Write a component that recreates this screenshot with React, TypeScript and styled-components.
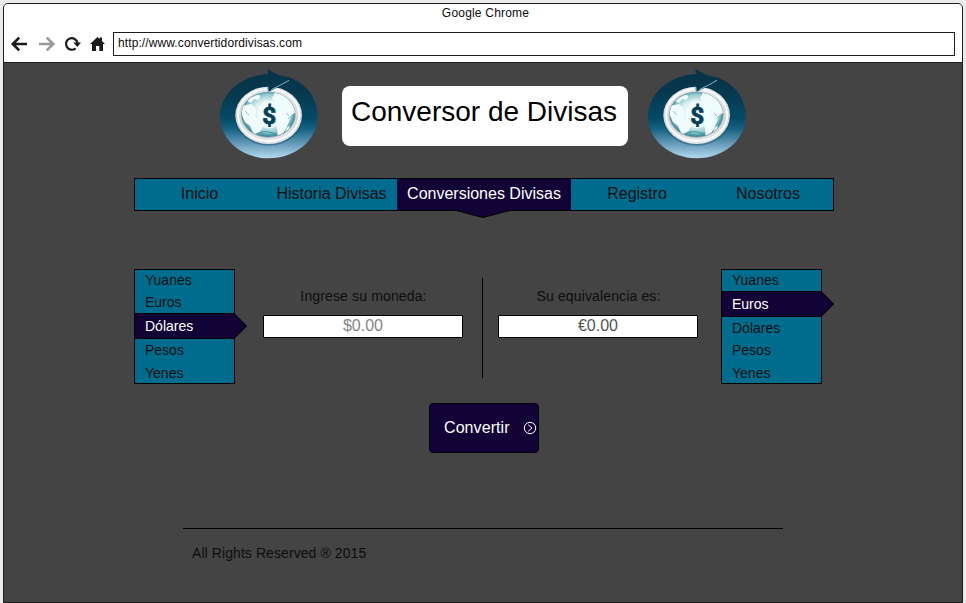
import React, { useId } from "react";
import styled, { createGlobalStyle, css } from "styled-components";

const teal = "#006d8f";
const navy = "#110335";
const gray = "#444444";
const ink = "#0d0d0d";

const GlobalStyle = createGlobalStyle`
  * { box-sizing: border-box; }
  body {
    margin: 0;
    background: #ebebeb;
    font-family: "Liberation Sans", Arial, sans-serif;
    color: ${ink};
    overflow: hidden;
  }
`;

const Screen = styled.div`
  width: 966px;
  height: 603px;
  padding: 3px 3px 0;
`;

const BrowserWindow = styled.div`
  width: 960px;
  height: 600px;
  border: 1px solid #1c1c1c;
  border-radius: 5px 5px 0 0;
  background: ${gray};
  overflow: hidden;
`;

const BrowserBar = styled.header`
  height: 59px;
  background: #fff;
  border-bottom: 1px solid #1c1c1c;
`;

const WindowTitle = styled.div`
  height: 28px;
  padding: 2px 0 0 5px;
  font-size: 12px;
  line-height: 14px;
  letter-spacing: 0.2px;
  text-align: center;
`;

const Toolbar = styled.div`
  display: flex;
  align-items: center;
  padding-right: 7px;
`;

const ToolIcons = styled.div`
  display: flex;
  width: 109px;
  padding-left: 6px;
`;

const Address = styled.div`
  flex: 1;
  height: 24px;
  border: 1px solid #1c1c1c;
  padding: 3px 4px;
  font-size: 12px;
  line-height: 14px;
  letter-spacing: 0.1px;
`;

const Header = styled.div`
  display: flex;
  height: 115px;
  padding: 1px 0 0 206px;
`;

const Title = styled.h1`
  width: 286px;
  height: 60px;
  margin: 22px 10px 0 12px;
  padding: 9px 2px 0 0;
  border-radius: 8px;
  background: #fff;
  color: #000;
  font-size: 28px;
  font-weight: 400;
  line-height: 33px;
  text-align: center;
  white-space: nowrap;
`;

const Nav = styled.nav`
  display: flex;
  width: 700px;
  height: 33px;
  margin-left: 130px;
  border: 1px solid #000;
  background: ${teal};
`;

const NavItem = styled.a<{ $active?: boolean }>`
  position: relative;
  flex: 0 0 131px;
  font-size: 16px;
  line-height: 30px;
  text-align: center;
  white-space: nowrap;
  &:first-child {
    padding-right: 2px;
  }
  &:nth-child(n + 4) {
    padding-left: 1px;
  }
  ${(p) =>
    p.$active &&
    css`
      flex: 0 0 174px;
      background: ${navy};
      color: #fff;
    `}
`;

const NavPointer = styled.svg`
  position: absolute;
  left: 59px;
  top: 31px;
  overflow: visible;
`;

const Converter = styled.main`
  display: flex;
  width: 700px;
  height: 115px;
  margin: 58px 0 0 130px;
`;

const CurrencyList = styled.ul`
  width: 101px;
  height: 115px;
  margin: 0;
  padding: 0;
  list-style: none;
  border: 1px solid #000;
  background: ${teal};
`;

const Currency = styled.li<{ $active?: boolean }>`
  position: relative;
  height: 22px;
  padding-left: 10px;
  font-size: 14px;
  line-height: 21px;
  &:nth-child(n + 3) {
    line-height: 23px;
  }
  &:last-child {
    line-height: 24px;
  }
  ${(p) =>
    p.$active &&
    css`
      && {
        height: 26px;
        margin-top: -1px;
        border: solid #000;
        border-width: 1px 0;
        background: ${navy};
        color: #fff;
        line-height: 25px;
      }
    `}
`;

const CurrencyPointer = styled.svg`
  position: absolute;
  left: 99px;
  top: -1px;
`;

const Field = styled.label<{ $side: "from" | "to" }>`
  width: 200px;
  margin: ${(p) => (p.$side === "from" ? "18px 19px 0 28px" : "18px 23px 0 15px")};
  font-size: 14px;
  line-height: 18px;
  letter-spacing: 0.14px;
  text-align: center;
  text-indent: 1px;
`;

const Amount = styled.input<{ $tone: string }>`
  display: block;
  width: 200px;
  height: 23px;
  margin-top: 10px;
  padding: 0 0 2px;
  border: 1px solid #000;
  border-radius: 1px;
  background: #fff;
  color: ${(p) => p.$tone};
  font: 16px "Liberation Sans", Arial, sans-serif;
  text-align: center;
  outline: none;
`;

const Divider = styled.div`
  width: 1px;
  height: 100px;
  margin-top: 9px;
  background: #000;
`;

const ConvertButton = styled.button`
  display: flex;
  align-items: center;
  justify-content: space-between;
  width: 110px;
  height: 50px;
  margin: 19px 0 0 425px;
  padding: 0 1px 1px 14px;
  border: 1px solid #000;
  border-radius: 4px;
  background: ${navy};
  color: #fff;
  font: 16px "Liberation Sans", Arial, sans-serif;
  letter-spacing: 0.08px;
`;

const Footer = styled.footer`
  width: 600px;
  margin: 75px 0 0 179px;
  padding: 16px 0 0 9px;
  border-top: 1px solid #000;
  font-size: 14px;
  line-height: 17px;
  letter-spacing: 0.08px;
`;

function GlobeLogo() {
  const id = useId().replace(/[^a-zA-Z0-9]/g, "");
  return (
    <svg width="120" height="100" viewBox="0 0 360 300" aria-hidden="true">
      <defs>
        <linearGradient id={`${id}disc`} x1="0" y1="0" x2="0" y2="1">
          <stop offset="0" stopColor="#073347" />
          <stop offset="0.25" stopColor="#06384d" />
          <stop offset="0.55" stopColor="#034a66" />
          <stop offset="0.68" stopColor="#176584" />
          <stop offset="0.84" stopColor="#689cbb" />
          <stop offset="1" stopColor="#b2d9ee" />
        </linearGradient>
        <linearGradient id={`${id}ring`} x1="0" y1="0" x2="0" y2="1">
          <stop offset="0" stopColor="#e4e7e9" />
          <stop offset="0.6" stopColor="#d3d6d9" />
          <stop offset="1" stopColor="#e6e7ea" />
        </linearGradient>
        <radialGradient id={`${id}sea`} cx="0.5" cy="0.48" r="0.52">
          <stop offset="0" stopColor="#f5ffff" />
          <stop offset="0.55" stopColor="#dbf1f3" />
          <stop offset="0.82" stopColor="#93c8cf" />
          <stop offset="1" stopColor="#2b808d" />
        </radialGradient>
        <clipPath id={`${id}globe`}>
          <ellipse cx="175" cy="151" rx="80" ry="67" />
        </clipPath>
      </defs>
      <path
        d="M172 15 L207 34 C278 43 323 94 323 157 C323 228 257 283 176 283 C95 283 30 227 30 157 C30 91 91 34 174 30 Z"
        fill={`url(#${id}disc)`}
      />
      <ellipse cx="176" cy="157" rx="103" ry="88" fill="#05435b" opacity="0.4" />
      <ellipse cx="176" cy="154" rx="100" ry="86" fill={`url(#${id}ring)`} />
      <ellipse cx="176" cy="153" rx="92" ry="78" fill="none" stroke="#fafafa" strokeWidth="6" />
      <ellipse cx="175" cy="152" rx="82" ry="69" fill="#98a9b2" />
      <ellipse cx="175" cy="151" rx="80" ry="67" fill={`url(#${id}sea)`} />
      <g clipPath={`url(#${id}globe)`}>
        <path d="M112 112 Q126 95 147 92 L151 98 145 108 132 105 124 116Z" fill="#effafb" />
        <path d="M99 125 L124 120 138 136 137 160 151 170 160 185 149 205 134 217 127 202 120 185 105 175 94 149Z" fill="#f1fbfb" />
        <path d="M194 87 L228 91 251 116 260 143 244 154 237 173 228 194 214 216 203 216 200 187 192 170 194 145 185 132 197 116 186 103Z" fill="#f0fbfb" />
        <path d="M224 207 L230 191 240 184 236 201Z" fill="#e3f8f9" />
        <path d="M137 210 Q166 196 198 210" fill="none" stroke="#3c929d" strokeWidth="3" />
        <path d="M105 141 L117 153 M229 147 L237 157 M234 165 L243 156" stroke="#8cc4cb" strokeWidth="3" />
        <ellipse cx="178" cy="151" rx="36" ry="42" fill="#f4ffff" opacity="0.72" />
      </g>
      <path d="M174 67 L176 83 L205 69 L190 65 Z" fill="#06394e" />
      <path d="M173 68 V80 M184 77 Q209 65 237 49" fill="none" stroke="#7fb1c9" strokeWidth="3" />
      <text
        x="178"
        y="181"
        textAnchor="middle"
        fontFamily="Roboto, sans-serif"
        fontSize="73"
        fontWeight="700"
        fill="#063f59"
        stroke="#063f59"
        strokeWidth="2.5"
      >
        $
      </text>
    </svg>
  );
}

function BrowserIcons() {
  return (
    <svg width="100" height="20" viewBox="0 0 100 20" fill="none" aria-hidden="true">
      <path d="M17 10 H3 M9.2 3.6 L2.8 10 L9.2 16.4" stroke="#1b1b1b" strokeWidth="2.7" />
      <path d="M29 10 H43 M36.8 3.6 L43.2 10 L36.8 16.4" stroke="#999" strokeWidth="2.7" />
      <path d="M65.6 14.3 A5.8 5.8 0 1 1 67.5 9" stroke="#1b1b1b" strokeWidth="2.2" />
      <path d="M63.2 8.5 H71 L67.4 13Z" fill="#1b1b1b" />
      <path d="M80 10 L87.5 3 L89.5 5 V3.4 H92 V7 L95 10 H93 V17 H89.3 V12 H86 V17 H82 V10Z" fill="#1b1b1b" />
    </svg>
  );
}

function CurrencyMenu({ selected }: { selected: string }) {
  return (
    <CurrencyList>
      {["Yuanes", "Euros", "Dólares", "Pesos", "Yenes"].map((name) => (
        <Currency key={name} $active={name === selected}>
          {name}
          {name === selected && (
            <CurrencyPointer width="14" height="26" viewBox="0 0 14 26">
              <path d="M0 0 L13 13 L0 26Z" fill={navy} />
              <path d="M0 .5 L12.5 13 L0 25.5" fill="none" stroke="#000" />
            </CurrencyPointer>
          )}
        </Currency>
      ))}
    </CurrencyList>
  );
}

export default function App() {
  return (
    <Screen>
      <GlobalStyle />
      <BrowserWindow>
        <BrowserBar>
          <WindowTitle>Google Chrome</WindowTitle>
          <Toolbar>
            <ToolIcons>
              <BrowserIcons />
            </ToolIcons>
            <Address>http://www.convertidordivisas.com</Address>
          </Toolbar>
        </BrowserBar>
        <Header>
          <GlobeLogo />
          <Title>Conversor de Divisas</Title>
          <GlobeLogo />
        </Header>
        <Nav>
          <NavItem>Inicio</NavItem>
          <NavItem>Historia Divisas</NavItem>
          <NavItem $active>
            Conversiones Divisas
            <NavPointer width="54" height="9" viewBox="0 0 54 9">
              <path d="M0 0 H54 L27 7.5Z" fill={navy} />
              <path d="M0 .5 L27 7.5 L54 .5" fill="none" stroke="#000" />
            </NavPointer>
          </NavItem>
          <NavItem>Registro</NavItem>
          <NavItem>Nosotros</NavItem>
        </Nav>
        <Converter>
          <CurrencyMenu selected="Dólares" />
          <Field $side="from">
            Ingrese su moneda:
            <Amount $tone="#858585" defaultValue="$0.00" />
          </Field>
          <Divider />
          <Field $side="to">
            Su equivalencia es:
            <Amount $tone="#555" defaultValue="€0.00" readOnly />
          </Field>
          <CurrencyMenu selected="Euros" />
        </Converter>
        <ConvertButton>
          Convertir
          <svg width="14" height="14" viewBox="0 0 14 14" fill="none" stroke="#fff" aria-hidden="true">
            <circle cx="7" cy="7" r="5.7" />
            <path d="M5.2 3.8 L9 7 L5.2 10.2" />
          </svg>
        </ConvertButton>
        <Footer>All Rights Reserved ® 2015</Footer>
      </BrowserWindow>
    </Screen>
  );
}
